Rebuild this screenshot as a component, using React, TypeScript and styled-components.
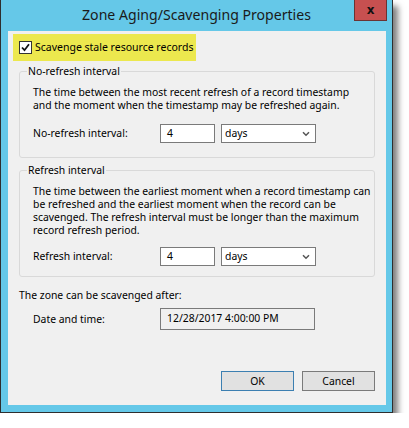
import React from "react";
import styled, { createGlobalStyle } from "styled-components";

const Global = createGlobalStyle`
  html, body { margin: 0; padding: 0; background: #ffffff; }
  body { font-family: "Noto Sans", "Open Sans", sans-serif; }
`;

const Window = styled.div`
  width: 391px;
  height: 412px;
  border: 1px solid #2e2e2e;
  border-top: 0;
  background: #65c8e8;
  box-shadow: 5px 6px 6px rgba(0, 0, 0, 0.5);
  display: flex;
  flex-direction: column;
`;

const TitleBar = styled.div`
  height: 31px;
  flex: none;
  display: grid;
  grid-template-columns: 1fr auto 1fr;
  align-items: start;
`;

const Title = styled.div`
  grid-column: 2;
  font-family: "Noto Sans", sans-serif;
  font-size: 14.1px;
  color: #1a1a1a;
  line-height: 16px;
  padding-top: 7px;
  white-space: nowrap;
`;

const CloseButton = styled.div`
  grid-column: 3;
  justify-self: end;
  margin-right: 5px;
  width: 31px;
  height: 20px;
  background: #c75050;
  border: 1px solid #6b3333;
  border-top: 0;
  display: flex;
  align-items: center;
  justify-content: center;
  font-family: "DejaVu Sans", sans-serif;
  font-weight: bold;
  font-size: 12px;
  color: #111;
  line-height: 1;
`;

const Client = styled.div`
  flex: 1;
  margin: 0 6px 7px 7px;
  background: #f0f0f0;
  display: flex;
  flex-direction: column;
  padding: 3px 11px 0 5px;
  font-size: 10.4px;
  color: #000;
  line-height: 13px;
  white-space: nowrap;
`;

const Highlight = styled.label`
  align-self: flex-start;
  width: 183px;
  height: 27px;
  box-sizing: border-box;
  background: #ece84e;
  display: flex;
  align-items: center;
  gap: 3px;
  padding: 0 0 1px 6px;
  font-size: 10.5px;
`;

const CheckBox = styled.span`
  flex: none;
  width: 11px;
  height: 11px;
  border: 1px solid #333;
  background: #fff;
  display: flex;
  align-items: center;
  justify-content: center;
`;

const Group = styled.fieldset<{ $top: number; $bottom: number }>`
  margin: ${(p) => p.$top}px 0 0 6px;
  padding: 8px 12px ${(p) => p.$bottom}px 13px;
  border: 1px solid #d9d9d9;
  border-radius: 3px;
  min-width: 0;
`;

const Legend = styled.legend`
  padding: 0 1px;
  margin-left: -6px;
  font-size: 10.4px;
  line-height: 13px;
`;

const Description = styled.p`
  margin: 0;
  line-height: 13px;
`;

const Row = styled.div<{ $mt: number }>`
  display: grid;
  grid-template-columns: 121px 55px 95px;
  column-gap: 6px;
  align-items: center;
  margin-top: ${(p) => p.$mt}px;
`;

const Field = styled.div`
  height: 19px;
  box-sizing: border-box;
  border: 1px solid #7a7a7a;
  background: #fff;
  padding: 0 6px;
  display: flex;
  align-items: center;
`;

const Combo = styled(Field)`
  justify-content: space-between;
  padding: 0 5px 0 3px;
`;

const ZoneText = styled.div`
  margin: 12px 0 0 0;
  padding-left: 6px;
  line-height: 13px;
`;

const DateRow = styled.div`
  display: grid;
  grid-template-columns: 127px 155px;
  align-items: center;
  margin: 6px 0 0 20px;
`;

const DateBox = styled.div`
  height: 22px;
  box-sizing: border-box;
  border: 1px solid #7a7a7a;
  padding: 1px 6px 0;
  line-height: 16px;
`;

const Buttons = styled.div`
  display: flex;
  justify-content: flex-end;
  gap: 8px;
  margin-top: 41px;
`;

const Button = styled.div<{ $primary?: boolean }>`
  width: 73px;
  height: 20px;
  box-sizing: border-box;
  background: #e1e1e1;
  border: 1px solid ${(p) => (p.$primary ? "#3c7fb1" : "#7a7a7a")};
  display: flex;
  align-items: center;
  justify-content: center;
`;

const Chevron = () => (
  <svg width="8" height="6" viewBox="0 0 8 6">
    <path d="M1 1.2 L4 4.2 L7 1.2" fill="none" stroke="#555" strokeWidth="1.5" />
  </svg>
);

export default function App() {
  return (
    <>
      <Global />
      <Window>
        <TitleBar>
          <Title>Zone Aging/Scavenging Properties</Title>
          <CloseButton>x</CloseButton>
        </TitleBar>
        <Client>
          <Highlight>
            <CheckBox>
              <svg width="9" height="9" viewBox="0 0 9 9">
                <path d="M1 4.5 L3.5 7.2 L8 1.2" fill="none" stroke="#111" strokeWidth="1.8" />
              </svg>
            </CheckBox>
            Scavenge stale resource records
          </Highlight>
          <Group $top={4} $bottom={14}>
            <Legend>No-refresh interval</Legend>
            <Description>
              The time between the most recent refresh of a record timestamp
              <br />
              and the moment when the timestamp may be refreshed again.
            </Description>
            <Row $mt={12}>
              <span>No-refresh interval:</span>
              <Field>4</Field>
              <Combo>
                days
                <Chevron />
              </Combo>
            </Row>
          </Group>
          <Group $top={6} $bottom={10}>
            <Legend>Refresh interval</Legend>
            <Description>
              The time between the earliest moment when a record timestamp can
              <br />
              be refreshed and the earliest moment when the record can be
              <br />
              scavenged. The refresh interval must be longer than the maximum
              <br />
              record refresh period.
            </Description>
            <Row $mt={10}>
              <span>Refresh interval:</span>
              <Field>4</Field>
              <Combo>
                days
                <Chevron />
              </Combo>
            </Row>
          </Group>
          <ZoneText>The zone can be scavenged after:</ZoneText>
          <DateRow>
            <span>Date and time:</span>
            <DateBox>12/28/2017 4:00:00 PM</DateBox>
          </DateRow>
          <Buttons>
            <Button $primary>OK</Button>
            <Button>Cancel</Button>
          </Buttons>
        </Client>
      </Window>
    </>
  );
}
